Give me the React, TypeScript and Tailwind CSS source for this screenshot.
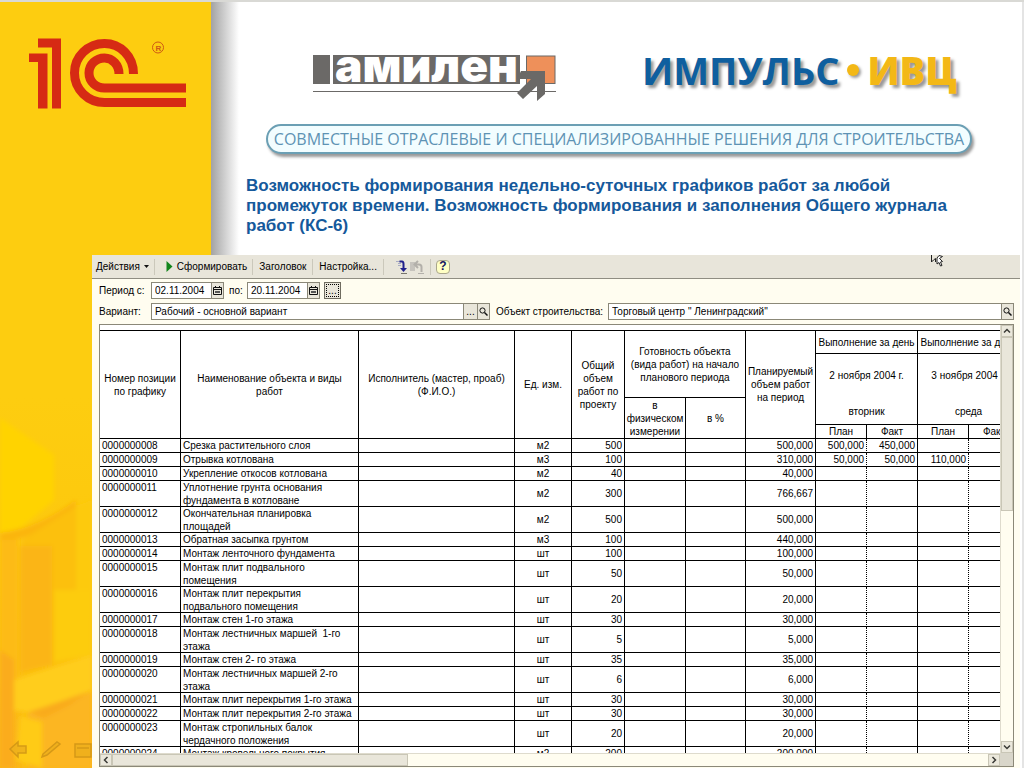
import type { ReactNode } from 'react';
import clsx from 'clsx';

interface WorkRow {
  code: string;
  name: string;
  unit: string;
  total: string;
  planned: string;
  days?: string[];
  tall?: boolean;
}

const ROWS: WorkRow[] = [
  { code: '0000000008', name: 'Срезка растительного слоя', unit: 'м2', total: '500', planned: '500,000', days: ['500,000', '450,000', '', ''] },
  { code: '0000000009', name: 'Отрывка котлована', unit: 'м3', total: '100', planned: '310,000', days: ['50,000', '50,000', '110,000', ''] },
  { code: '0000000010', name: 'Укрепление откосов котлована', unit: 'м2', total: '40', planned: '40,000' },
  { code: '0000000011', name: 'Уплотнение грунта основания\nфундамента в котловане', unit: 'м2', total: '300', planned: '766,667', tall: true },
  { code: '0000000012', name: 'Окончательная планировка\nплощадей', unit: 'м2', total: '500', planned: '500,000', tall: true },
  { code: '0000000013', name: 'Обратная засыпка грунтом', unit: 'м3', total: '100', planned: '440,000' },
  { code: '0000000014', name: 'Монтаж ленточного фундамента', unit: 'шт', total: '100', planned: '100,000' },
  { code: '0000000015', name: 'Монтаж плит подвального\nпомещения', unit: 'шт', total: '50', planned: '50,000', tall: true },
  { code: '0000000016', name: 'Монтаж плит перекрытия\nподвального помещения', unit: 'шт', total: '20', planned: '20,000', tall: true },
  { code: '0000000017', name: 'Монтаж стен 1-го этажа', unit: 'шт', total: '30', planned: '30,000' },
  { code: '0000000018', name: 'Монтаж лестничных маршей  1-го\nэтажа', unit: 'шт', total: '5', planned: '5,000', tall: true },
  { code: '0000000019', name: 'Монтаж стен 2- го этажа', unit: 'шт', total: '35', planned: '35,000' },
  { code: '0000000020', name: 'Монтаж лестничных маршей 2-го\nэтажа', unit: 'шт', total: '6', planned: '6,000', tall: true },
  { code: '0000000021', name: 'Монтаж плит перекрытия 1-го этажа', unit: 'шт', total: '30', planned: '30,000' },
  { code: '0000000022', name: 'Монтаж плит перекрытия 2-го этажа', unit: 'шт', total: '30', planned: '30,000' },
  { code: '0000000023', name: 'Монтаж стропильных балок\nчердачного положения', unit: 'шт', total: '20', planned: '20,000', tall: true },
  { code: '0000000024', name: 'Монтаж кровельного покрытия', unit: 'м2', total: '200', planned: '200,000' },
];

const COLUMNS = [
  'w-[81px]', 'w-[178px]', 'w-[156px]', 'w-[57px]', 'w-[53px]', 'w-[61px]', 'w-[60px]', 'w-[70px]',
  'w-[51px]', 'w-[51px]', 'w-[51px]', 'w-[51px]',
];

function Logo1C() {
  return (
    <svg className="absolute left-7 top-9 h-[76px] w-[164px]" viewBox="28 36 164 76" fill="none" role="img" aria-label="1С">
      <path d="M38 38.5H61V108.5H52V47.5H38ZM29 53.5H47.500V108.500H38V62H29Z" fill="#d62a14" />
      <path d="M133.500 74C133.500 56 120 43.500 104.500 43.500C88 43.500 74.500 56.500 74.500 73C74.500 89.500 88 102.500 104.500 102.500H186" stroke="#d62a14" strokeWidth="9" />
      <path d="M119 74C119 65 112.500 58 104.500 58C96 58 89 64.500 89 73C89 81.500 96 88 104.500 88H186" stroke="#d62a14" strokeWidth="9" />
      <circle cx="158" cy="47.500" r="5.500" stroke="#cf5a15" strokeWidth="1" />
      <text x="155.500" y="50.500" fontSize="8" fontWeight="700" fill="#cf5a15" fontFamily="Liberation Sans, sans-serif">R</text>
    </svg>
  );
}

function SidebarArt() {
  return (
    <svg className="absolute inset-x-0 bottom-0 h-[370px] w-full" viewBox="0 398 211 370" preserveAspectRatio="none" aria-hidden="true">
      <defs>
        <linearGradient id="fade" x1="0" y1="0" x2="0" y2="1">
          <stop offset="0" stopColor="#fdcd10" />
          <stop offset="0.5" stopColor="#fdc70c" />
          <stop offset="1" stopColor="#fbb61a" />
        </linearGradient>
        <filter id="soft"><feGaussianBlur stdDeviation="2" /></filter>
      </defs>
      <rect y="398" width="211" height="370" fill="url(#fade)" />
      <g filter="url(#soft)">
        <path d="M0 418L32 440L54 455V500L22 527L0 533Z" fill="#ffd304" />
        <path d="M0 533C30 530 55 515 76 500V508C55 525 28 540 0 542Z" fill="#fbb510" />
        <path d="M22 540L76 506V768H22Z" fill="#fcc00e" />
        <path d="M76 506L92 500V640H76Z" fill="#fdca0c" />
        <path d="M0 540H18V680L0 690Z" fill="#fdbb12" />
        <path d="M20 546H52V665L20 672Z" fill="#fbb512" />
        <path d="M54 590H92V655L54 662Z" fill="#fdcc10" />
        <path d="M8 682L60 665L92 655V690L30 712L8 710Z" fill="#ffcd1a" />
        <path d="M28 712L92 692V768H28Z" fill="#fcb622" />
        <path d="M20 716L42 722V768L16 760Z" fill="#ffcb16" />
        <path d="M30 712L88 692L68 706L44 718Z" fill="#f9ab1a" />
        <path d="M0 650L14 660V768H0Z" fill="#fbac1c" />
      </g>
      <g stroke="#cf9416" strokeWidth="1.500" fill="#eeb01c" opacity="0.85">
        <path d="M10 749L18 742V746H26V753H18V757Z" />
        <path d="M43 754L57 742L60 744L47 755L42 757Z" />
        <path d="M75 744H91V757H75ZM77 748H89" />
      </g>
    </svg>
  );
}

function AmilenLogo() {
  return (
    <svg className="h-[68px] w-[246px]" viewBox="312 34 246 68" role="img" aria-label="амилен">
      <rect x="313" y="55" width="17" height="29" fill="#6b6967" />
      <rect x="333" y="55" width="187" height="29" fill="#6b6967" />
      <text x="335" y="82" fontSize="46" fontWeight="900" fill="#fff" fontFamily="Inter, sans-serif">амилен</text>
      <path d="M313 91.500H556" stroke="#6b6967" />
      <rect x="526.500" y="56" width="28.500" height="27.500" fill="#ee905a" stroke="#6b6967" />
      <path d="M521 71H545V94L537 101V86L523 99L517 93L531 79H517Z" fill="#6b6967" />
    </svg>
  );
}

function ImpulsLogo() {
  return (
    <div className="flex items-center text-[38px] leading-[52px] font-bold font-['Open_Sans',sans-serif] [text-shadow:3px_3px_3px_#999]">
      <span className="text-[#0f5f9f]">ИМПУЛЬС</span>
      <span className="mx-2 size-3 rounded-full bg-[#f3b816] shadow-[2px_2px_3px_#999]" />
      <span className="font-extrabold text-[#f3b816]">ИВЦ</span>
    </div>
  );
}

function CalendarIcon() {
  return (
    <svg className="size-[9px]" viewBox="0 0 9 9" aria-hidden="true">
      <path d="M0.500 1.500H8.500V8.500H0.500ZM2.500 0V2M6.500 0V2M1 3.500H8" fill="none" stroke="#111" />
      <path d="M2 5H7V7H2Z" fill="#555" />
    </svg>
  );
}

function MagnifierIcon() {
  return (
    <svg className="size-[9px]" viewBox="0 0 9 9" fill="none" stroke="#111" aria-hidden="true">
      <circle cx="3.500" cy="3.500" r="2.600" />
      <path d="M5.500 5.500L8.500 8.500" strokeWidth="1.500" />
    </svg>
  );
}

function FieldButton({ label, children, last }: { label: string; children: ReactNode; last?: boolean }) {
  return (
    <button
      type="button"
      aria-label={label}
      className={clsx('flex shrink-0 items-center justify-center border-l border-[#8b8878] bg-[#e9e6da]', last ? 'w-3' : 'w-[14px]')}
    >
      {children}
    </button>
  );
}

function Separator() {
  return <span className="mx-[5px] h-4 w-px bg-[#cbc8bb]" />;
}

function Toolbar() {
  return (
    <div className="flex h-6 shrink-0 items-center border-b border-[#8f8d82] bg-[#e8e5da] pl-1">
      <button type="button" className="flex items-center gap-1">
        Действия
        <svg className="h-[3px] w-[5px]" viewBox="0 0 5 3" aria-hidden="true"><path d="M0 0H5L2.500 3Z" fill="#111" /></svg>
      </button>
      <Separator />
      <button type="button" className="flex items-center gap-1 pl-[6px]">
        <svg className="h-[11px] w-[7px]" viewBox="0 0 7 11" aria-hidden="true"><path d="M0.500 0L6.500 5.500L0.500 11Z" fill="#12851c" /></svg>
        Сформировать
      </button>
      <Separator />
      <button type="button" className="px-px">Заголовок</button>
      <Separator />
      <button type="button" className="px-px">Настройка...</button>
      <Separator />
      <button type="button" aria-label="Развернуть" className="ml-[6px]">
        <svg className="h-4 w-[14px]" viewBox="0 0 14 16" fill="none" aria-hidden="true">
          <path d="M1 2.500H5M3 4.500H6M3 6.500H6" stroke="#a9acc4" />
          <path d="M4.500 2.500H7Q8.500 2.500 8.500 5V11" stroke="#20208c" strokeWidth="2" />
          <path d="M5 9H12L8.500 13Z" fill="#20208c" />
          <path d="M6 14.500H12" stroke="#77756c" />
        </svg>
      </button>
      <button type="button" aria-label="Свернуть" disabled>
        <svg className="h-4 w-4" viewBox="0 0 16 16" fill="none" aria-hidden="true">
          <path d="M1 3H6V12H1Z" fill="#c6c3bd" />
          <path d="M6 5.500H10Q12.500 5.500 12.500 8V13M9 2L5.500 5.500L9 9" stroke="#b3b0aa" strokeWidth="2" />
          <path d="M9 14.500H15" stroke="#b3b0aa" />
        </svg>
      </button>
      <Separator />
      <button type="button" aria-label="Справка" className="flex size-[14px] items-center justify-center rounded-sm border border-[#aaa68c] bg-[#ffffc4] text-[12px] font-bold text-[#151560]">
        ?
      </button>
    </div>
  );
}

const fieldBox = 'flex h-[17px] border border-[#8b8878] bg-white';
const fieldInput = 'min-w-0 flex-1 bg-transparent px-[3px] outline-none';

function Filters() {
  return (
    <div className="flex shrink-0 flex-col gap-1 pt-[3px] pr-[6px] pl-[7px]">
      <div className="flex items-center">
        <label htmlFor="from" className="w-[52px]">Период с:</label>
        <div className={clsx(fieldBox, 'w-[73px]')}>
          <input id="from" className={fieldInput} defaultValue="02.11.2004" />
          <FieldButton label="Выбрать дату начала" last><CalendarIcon /></FieldButton>
        </div>
        <label htmlFor="to" className="w-[23px] pl-[5px]">по:</label>
        <div className={clsx(fieldBox, 'w-[73px]')}>
          <input id="to" className={fieldInput} defaultValue="20.11.2004" />
          <FieldButton label="Выбрать дату окончания" last><CalendarIcon /></FieldButton>
        </div>
        <button type="button" aria-label="Выбрать период" className="ml-1 flex h-[17px] w-[17px] items-center justify-center border border-[#6f6c60] bg-[#e9e6da] p-px">
          <span className="flex size-full items-center justify-center border border-dotted border-black leading-[11px]">...</span>
        </button>
      </div>
      <div className="flex items-center">
        <label htmlFor="variant" className="w-[52px]">Вариант:</label>
        <div className={clsx(fieldBox, 'w-[339px]')}>
          <input id="variant" className={fieldInput} defaultValue="Рабочий - основной вариант" />
          <FieldButton label="Выбрать вариант">...</FieldButton>
          <FieldButton label="Открыть вариант" last><MagnifierIcon /></FieldButton>
        </div>
        <label htmlFor="object" className="w-[118px] pl-[6px] whitespace-nowrap">Объект строительства:</label>
        <div className={clsx(fieldBox, 'flex-1')}>
          <input id="object" className={fieldInput} defaultValue={'Торговый центр " Ленинградский"'} />
          <FieldButton label="Открыть объект" last><MagnifierIcon /></FieldButton>
        </div>
      </div>
    </div>
  );
}

function Head({ children, className, ...span }: { children: ReactNode; className?: string; colSpan?: number; rowSpan?: number }) {
  return (
    <th {...span} className={clsx('border-r border-b border-black p-0 font-normal', className)}>
      {children}
    </th>
  );
}

function Cell({ children, className, tall }: { children?: ReactNode; className?: string; tall?: boolean }) {
  return (
    <td className="border-r border-b border-black p-0">
      <div className={clsx('flex px-[2px]', tall ? 'h-[25px]' : 'h-[13px]', className ?? 'items-center')}>{children}</div>
    </td>
  );
}

function WorkTable() {
  return (
    <table className="w-[920px] table-fixed border-separate border-spacing-0 border-t border-black leading-[13px]">
      <colgroup>
        {COLUMNS.map((width, i) => <col key={i} className={width} />)}
      </colgroup>
      <thead>
        <tr className="h-[23px]">
          <Head rowSpan={4}>Номер позиции<br />по графику</Head>
          <Head rowSpan={4}>Наименование объекта и виды<br />работ</Head>
          <Head rowSpan={4}>Исполнитель (мастер, проаб)<br />(Ф.И.О.)</Head>
          <Head rowSpan={4}>Ед. изм.</Head>
          <Head rowSpan={4}>Общий<br />объем<br />работ по<br />проекту</Head>
          <Head rowSpan={2} colSpan={2}>Готовность объекта<br />(вида работ) на начало<br />планового периода</Head>
          <Head rowSpan={4}>Планируемый<br />объем работ<br />на период</Head>
          <Head colSpan={2} className="whitespace-nowrap">Выполнение за день</Head>
          <Head colSpan={2} className="whitespace-nowrap">Выполнение за день</Head>
        </tr>
        <tr className="h-[44px]">
          <Head rowSpan={2} colSpan={2}><span className="block pt-2">2 ноября 2004 г.</span><span className="block pt-[23px]">вторник</span></Head>
          <Head rowSpan={2} colSpan={2}><span className="block pt-2">3 ноября 2004 г.</span><span className="block pt-[23px]">среда</span></Head>
        </tr>
        <tr className="h-[27px]">
          <Head rowSpan={2}>в<br />физическом<br />измерении</Head>
          <Head rowSpan={2}>в %</Head>
        </tr>
        <tr className="h-[14px]">
          <Head>План</Head>
          <Head>Факт</Head>
          <Head>План</Head>
          <Head>Факт</Head>
        </tr>
      </thead>
      <tbody>
        {ROWS.map(row => (
          <tr key={row.code}>
            <Cell tall={row.tall} className="items-start">{row.code}</Cell>
            <Cell tall={row.tall} className="items-start whitespace-pre">{row.name}</Cell>
            <Cell tall={row.tall} />
            <Cell tall={row.tall} className="items-center justify-center">{row.unit}</Cell>
            <Cell tall={row.tall} className="items-center justify-end">{row.total}</Cell>
            <Cell tall={row.tall} />
            <Cell tall={row.tall} />
            <Cell tall={row.tall} className="items-center justify-end">{row.planned}</Cell>
            {[0, 1, 2, 3].map(i => (
              <td key={i} className={clsx('border-r border-b border-black p-0', i % 2 === 0 && '[border-right-style:dotted]')}>
                <div className="px-[2px] text-right">{row.days?.[i]}</div>
              </td>
            ))}
          </tr>
        ))}
      </tbody>
    </table>
  );
}

function ScrollButton({ label, d }: { label: string; d: string }) {
  return (
    <button type="button" aria-label={label} className="flex size-3 shrink-0 items-center justify-center border border-[#c9c6b6] bg-[#ebe8dc]">
      <svg className="size-2" viewBox="0 0 8 8" fill="none" stroke="#3a3a36" strokeWidth="1.500" aria-hidden="true"><path d={d} /></svg>
    </button>
  );
}

function ReportWindow() {
  return (
    <section className="relative mr-1 ml-[92px] flex min-h-0 flex-1 flex-col bg-[#fffdf0] pb-px text-[10px] leading-[15px] text-black">
      <Toolbar />
      <Filters />
      <div className="mt-1 mr-[6px] ml-[7px] grid min-h-0 flex-1 grid-cols-[1fr_13px] grid-rows-[1fr_13px] border border-[#8b8878]">
        <div className="min-h-0 min-w-0 overflow-hidden bg-white pt-[5px]">
          <WorkTable />
        </div>
        <div className="flex flex-col border-l border-[#dedbcd]">
          <ScrollButton label="Вверх" d="M1 5.500L4 2.500L7 5.500" />
          <div className="h-[174px] border border-[#c9c6b6] bg-[#e9e6da]" />
          <div className="flex-1" />
          <ScrollButton label="Вниз" d="M1 2.500L4 5.500L7 2.500" />
        </div>
        <div className="flex border-t border-[#dedbcd]">
          <ScrollButton label="Влево" d="M5.500 1L2.500 4L5.500 7" />
          <div className="w-[296px] border border-[#c9c6b6] bg-[#e9e6da]" />
          <div className="flex-1" />
          <ScrollButton label="Вправо" d="M2.500 1L5.500 4L2.500 7" />
        </div>
        <div className="bg-[#d9d6ca]" />
      </div>
      <svg className="absolute top-0 right-[77px] h-3 w-3" viewBox="0 0 12 12" fill="none" stroke="#222" aria-hidden="true">
        <path d="M0.500 0V7L2.500 5L4.500 3.500V7" />
        <path d="M11.500 1.500L8 0.500L6 3V9L8 7.500L9.500 11L11 10.500L9.500 7L11.500 6.500L8.500 3.500Z" fill="#fff" />
      </svg>
    </section>
  );
}

export default function App() {
  return (
    <div className="relative flex h-screen flex-col overflow-hidden border-t-2 border-[#d9d9d5] bg-white font-['Liberation_Sans',Arial,sans-serif]">
      <aside className="absolute inset-y-0 left-0 w-[211px] bg-[#fdcd10]">
        <SidebarArt />
      </aside>
      <div className="absolute inset-y-0 left-[211px] w-7 bg-linear-to-r from-[#a3a3a3] to-white" />
      <div className="absolute inset-y-0 right-0 w-[2px] bg-[#e4e4e4]" />

      <header className="relative h-[253px] shrink-0 pt-8 pl-[246px]">
        <div className="absolute -top-[2px] left-0">
          <Logo1C />
        </div>
        <div className="flex items-start pl-[66px]">
          <AmilenLogo />
          <div className="pt-[10px] pl-[84px]"><ImpulsLogo /></div>
        </div>
        <div className="mt-[22px] ml-5 flex h-[30px] w-[706px] items-center justify-center rounded-full border-2 border-[#6b9fb4] bg-[#f2fdff] text-[16px] whitespace-nowrap text-[#5e93b4] shadow-[2px_3px_3px_#999] font-['Open_Sans',sans-serif]">
          СОВМЕСТНЫЕ ОТРАСЛЕВЫЕ И СПЕЦИАЛИЗИРОВАННЫЕ РЕШЕНИЯ ДЛЯ СТРОИТЕЛЬСТВА
        </div>
        <h1 className="mt-[22px] max-w-[720px] text-[17px] leading-[20px] font-bold text-[#15599b]">
          Возможность формирования недельно-суточных графиков работ за любой промежуток времени. Возможность формирования и заполнения Общего журнала работ (КС-6)
        </h1>
      </header>

      <ReportWindow />
    </div>
  );
}
